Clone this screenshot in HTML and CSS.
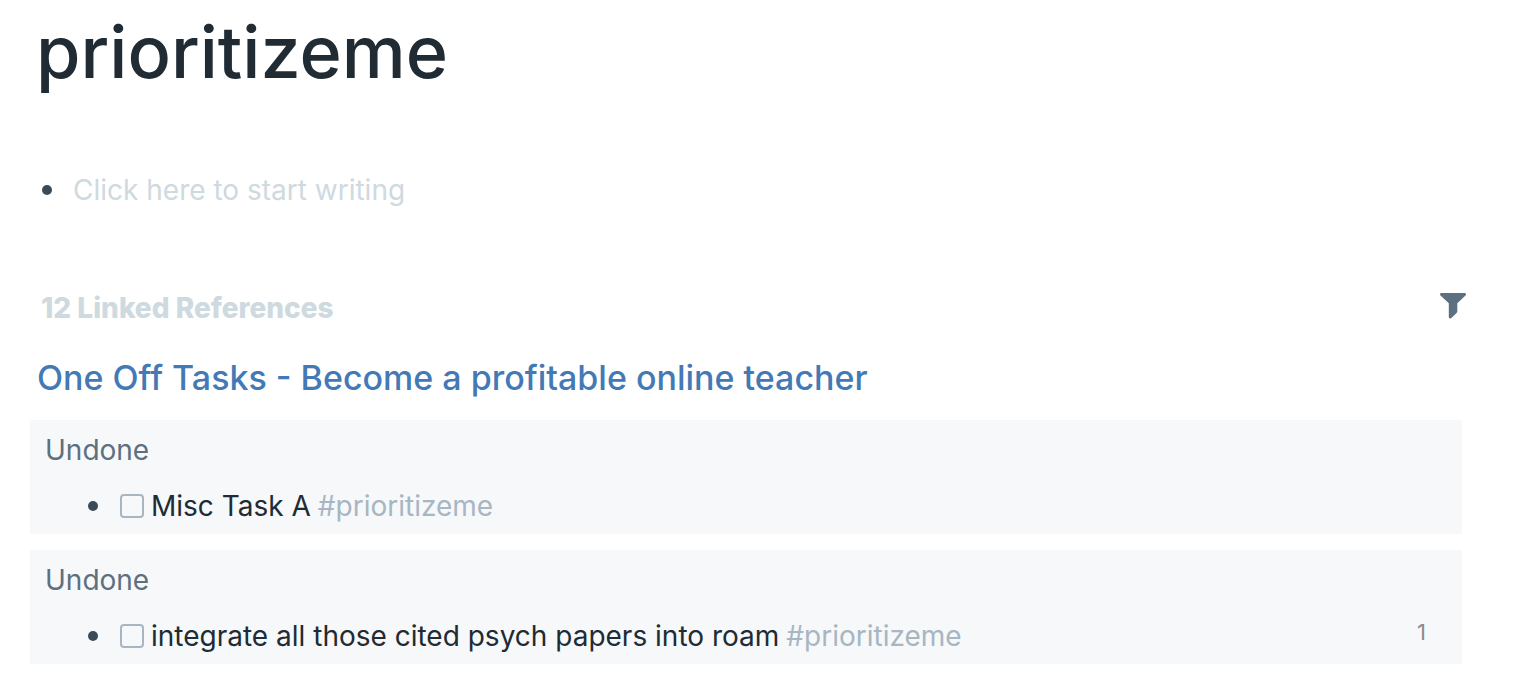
FILE: index.html
```html
<!DOCTYPE html>
<html lang="en">
<head>
<meta charset="utf-8">
<title>prioritizeme</title>
<link rel="stylesheet" href="styles.css">
</head>
<body>
<main class="page">
  <h1 class="title">prioritizeme</h1>
  <div class="starter">
    <span class="bullet"></span>
    <button class="placeholder" type="button">Click here to start writing</button>
  </div>
  <section class="references">
    <header class="references-head">
      <h2 class="references-title">12 Linked References</h2>
      <button class="filter" type="button" aria-label="Filter references">
        <svg class="filter-icon" viewBox="0 0 26 26" aria-hidden="true"><path d="M1.4 0H24.6Q26 0 26 1.3Q26 2 25.5 2.4L17.3 10.3V18.6Q17.3 19.2 16.8 19.7L11.4 25Q10.9 25.4 10.3 25.4Q8.8 25.4 8.8 23.9V10.3L.5 2.4Q0 2 0 1.3Q0 0 1.4 0Z"/></svg>
      </button>
    </header>
    <h3 class="source"><a class="source-link" href="#">One Off Tasks - Become a profitable online teacher</a></h3>
    <div class="cards">
      <article class="card">
        <div class="crumb">Undone</div>
        <div class="task">
          <span class="bullet"></span>
          <input class="check" type="checkbox" id="task-a">
          <label class="task-label" for="task-a">Misc Task A</label>
          <a class="tag" href="#">#prioritizeme</a>
        </div>
      </article>
      <article class="card">
        <div class="crumb">Undone</div>
        <div class="task">
          <span class="bullet"></span>
          <input class="check" type="checkbox" id="task-b">
          <label class="task-label" for="task-b">integrate all those cited psych papers into roam</label>
          <a class="tag" href="#">#prioritizeme</a>
          <span class="count">1</span>
        </div>
      </article>
    </div>
  </section>
</main>
</body>
</html>
```
FILE: styles.css
```css
* {
  box-sizing: border-box;
}

body {
  margin: 0;
  background: #fff;
  color: #202b33;
  font-family: Inter, "Liberation Sans", sans-serif;
  font-size: 28px;
  line-height: 36px;
}

h1, h2, h3 {
  margin: 0;
}

button {
  padding: 0;
  border: 0;
  background: none;
  font: inherit;
}

a {
  text-decoration: none;
}

.page {
  padding: 8px 62px 30px 30px;
}

.title {
  padding-left: 6px;
  font-size: 72px;
  line-height: 88px;
  font-weight: 500;
}

.starter {
  display: flex;
  align-items: center;
  gap: 21px;
  margin-top: 76px;
  padding-left: 12px;
}

.bullet {
  flex: none;
  width: 10px;
  height: 10px;
  border-radius: 50%;
  background: #394b59;
}

.placeholder {
  color: #ced9e0;
}

.references {
  margin-top: 82px;
}

.references-head {
  display: flex;
  align-items: flex-start;
  justify-content: space-between;
  padding-left: 11px;
  margin-right: -4px;
}

.references-title {
  color: #ced9e0;
  font-size: 28px;
  font-weight: 800;
}

.filter {
  display: flex;
  padding-top: 3px;
}

.filter-icon {
  width: 26px;
  height: 26px;
  fill: #5c7080;
}

.source {
  margin-top: 32px;
  padding-left: 7px;
  font-size: 34px;
  line-height: 40px;
  font-weight: 500;
}

.source-link {
  color: #437ab5;
}

.cards {
  display: grid;
  gap: 16px;
  margin-top: 22px;
}

.card {
  padding: 12px 15px 10px;
  background: #f6f8fa;
}

.crumb {
  color: #5c7080;
}

.task {
  display: flex;
  align-items: center;
  gap: 7px;
  margin-top: 20px;
  padding-left: 43px;
}

.check {
  appearance: none;
  flex: none;
  width: 24px;
  height: 24px;
  margin: 0 0 0 15px;
  border: 2px solid #a7b6c2;
  border-radius: 4px;
  background: transparent;
}

.tag {
  color: #a7b6c2;
}

.count {
  align-self: flex-start;
  margin: 0 21px 0 auto;
  color: #8a8a8a;
  font-size: 22px;
  line-height: 28px;
}
```
